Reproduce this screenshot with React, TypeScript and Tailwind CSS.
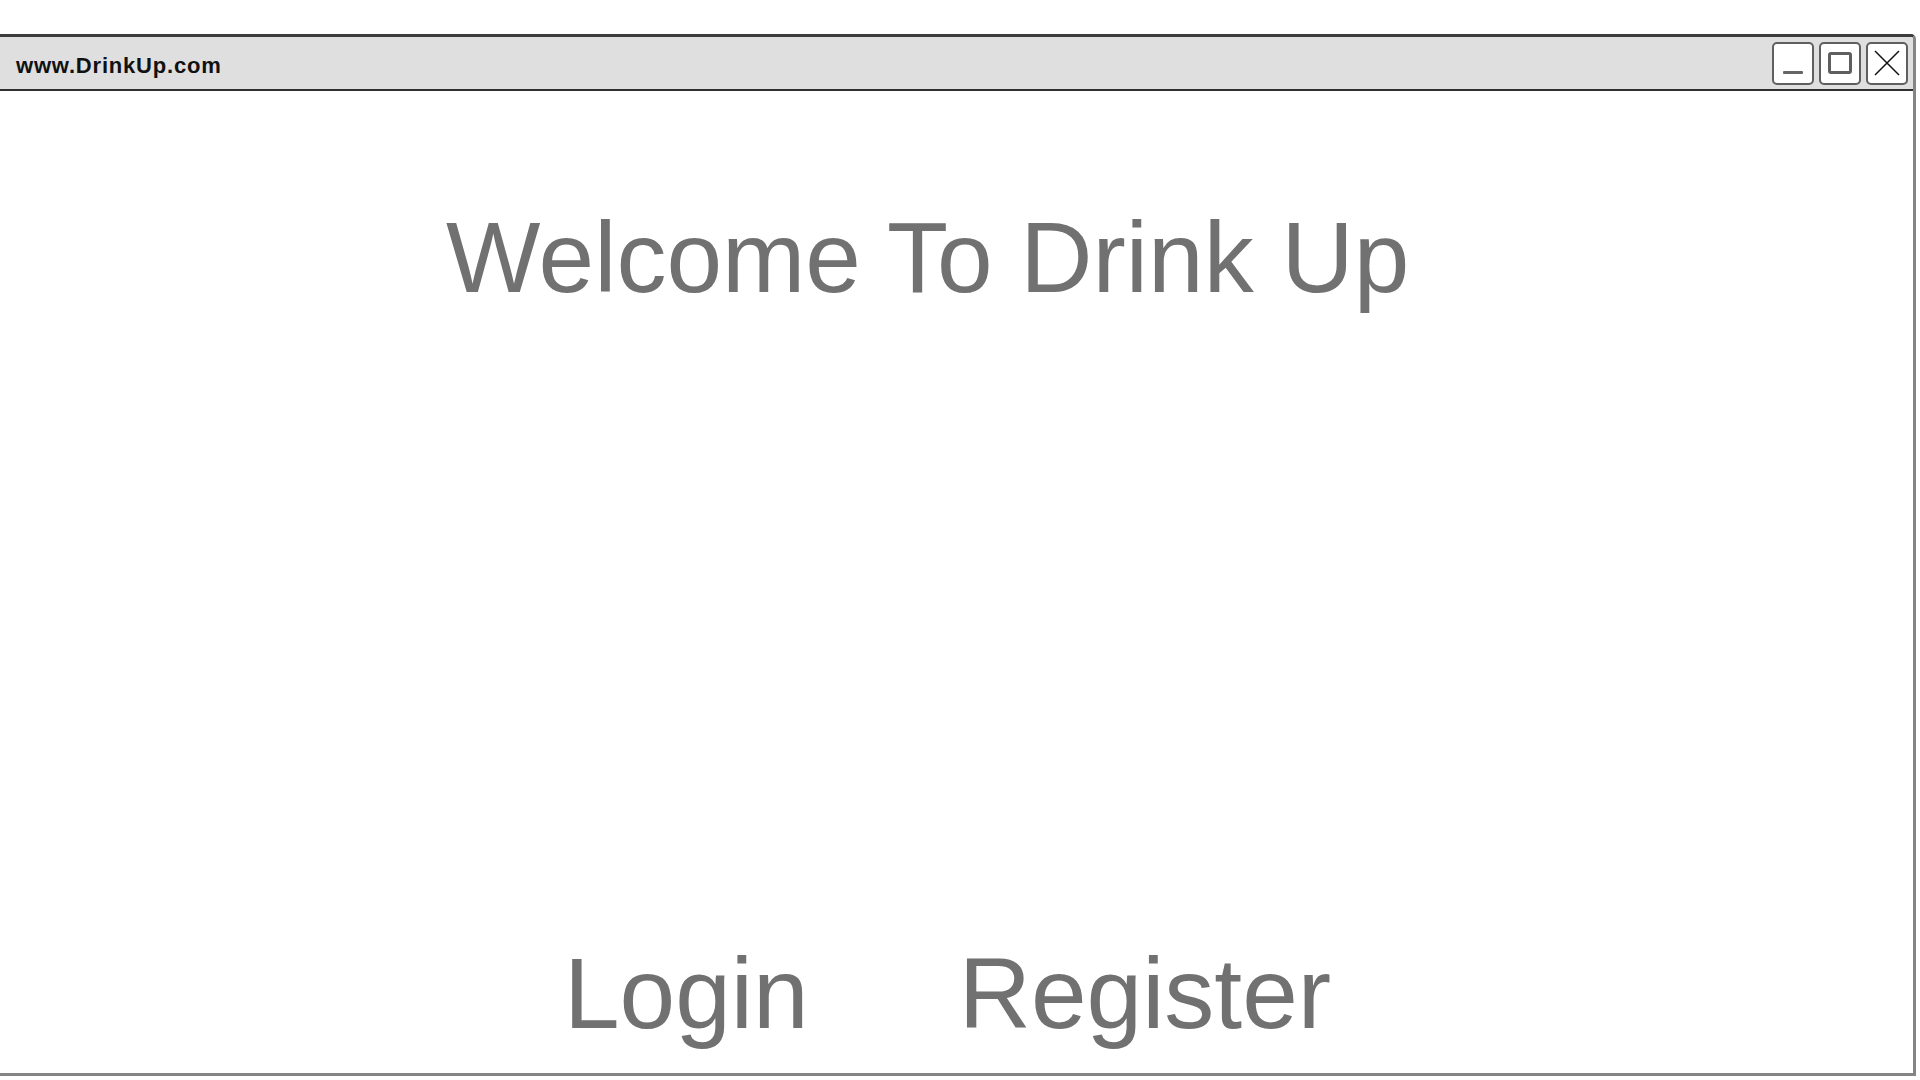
import React from "react";

function WinButton({ children }: { children: React.ReactNode }) {
  return (
    <div className="w-[42px] h-[43px] rounded-[5px] border-2 border-[#5f5f5f] bg-white flex items-center justify-center relative">
      {children}
    </div>
  );
}

export default function App() {
  return (
    <div className="w-[1920px] h-[1080px] bg-white overflow-hidden pt-[34px]">
      <div
        className="w-[1916px] h-[1042px] border-t-[3px] border-t-[#3c3c3c] border-r-[3px] border-r-[#858585] border-b-[3px] border-b-[#858585] rounded-tr-[5px] flex flex-col"
        style={{ fontFamily: '"Liberation Sans", Arial, sans-serif' }}
      >
        <div className="h-[54px] bg-[#dfdfdf] border-b-2 border-b-[#2f2f2f] flex items-center justify-between pl-[16px] pr-[5px] rounded-tr-[3px]">
          <span
            className="text-[22px] font-bold tracking-[0.8px] text-[#111] leading-none pt-[6px]"
            style={{ fontFamily: '"Comic Sans MS", "Liberation Sans", Arial, sans-serif' }}
          >
            www.DrinkUp.com
          </span>
          <div className="flex items-center gap-[5px]">
            <WinButton>
              <div className="absolute left-[9px] bottom-[9px] w-[20px] h-[3px] bg-[#666] rounded-[1px]" />
            </WinButton>
            <WinButton>
              <div className="w-[24px] h-[22px] border-[3px] border-[#5f5f5f] rounded-[3px]" />
            </WinButton>
            <WinButton>
              <svg width="26" height="26" viewBox="0 0 26 26">
                <path d="M1 1 L25 25 M25 1 L1 25" stroke="#111" strokeWidth="1.5" />
              </svg>
            </WinButton>
          </div>
        </div>
        <div className="flex-1 flex flex-col pt-[116px] pb-[30px]">
          <div className="pl-[446px] text-[100px] leading-[100px] text-[#717171] whitespace-nowrap">
            Welcome To Drink Up
          </div>
          <div className="flex-1" />
          <div className="pl-[564px] flex gap-[150px] text-[100px] leading-[100px] text-[#717171] whitespace-nowrap">
            <span>Login</span>
            <span>Register</span>
          </div>
        </div>
      </div>
    </div>
  );
}
